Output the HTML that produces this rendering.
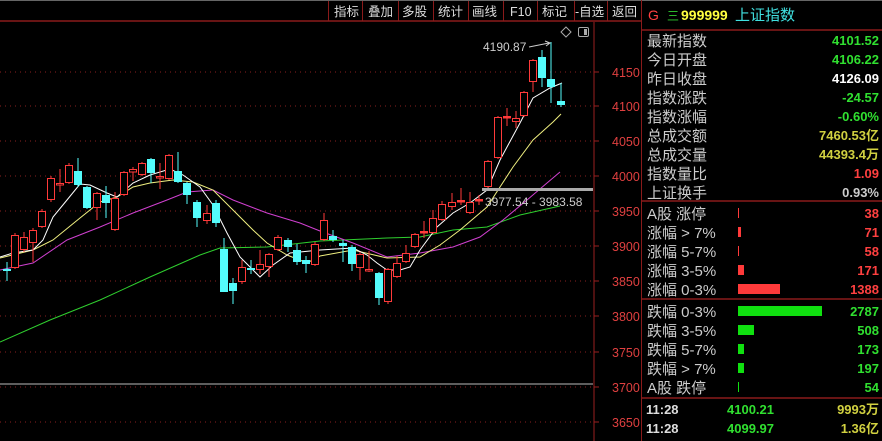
<!DOCTYPE html>
<html><head><meta charset="utf-8"><style>
html,body{margin:0;padding:0;background:#000;width:882px;height:441px;overflow:hidden}
svg{display:block}
.cn{font-family:"Liberation Sans","Noto Sans CJK SC",sans-serif}
</style></head><body>
<svg width="882" height="441" xmlns="http://www.w3.org/2000/svg" class="cn">
<rect width="882" height="441" fill="#000"/>
<line x1="0" y1="0.5" x2="882" y2="0.5" stroke="#666"/>
<!-- top bar -->
<line x1="0" y1="21" x2="641" y2="21" stroke="#8a1a1a" stroke-width="1.5"/>
<g stroke="#8a1a1a">
<line x1="328.5" y1="1" x2="328.5" y2="21"/><line x1="362.5" y1="1" x2="362.5" y2="21"/>
<line x1="398.5" y1="1" x2="398.5" y2="21"/><line x1="433.5" y1="1" x2="433.5" y2="21"/>
<line x1="468.5" y1="1" x2="468.5" y2="21"/><line x1="503.5" y1="1" x2="503.5" y2="21"/>
<line x1="537.5" y1="1" x2="537.5" y2="21"/><line x1="574.5" y1="1" x2="574.5" y2="21"/>
<line x1="607.5" y1="1" x2="607.5" y2="21"/><line x1="641.5" y1="0" x2="641.5" y2="441"/>
</g>
<g fill="#ddd" font-size="12.5">
<text x="334" y="16">指标</text><text x="368" y="16">叠加</text><text x="402" y="16">多股</text>
<text x="438" y="16">统计</text><text x="472" y="16">画线</text>
<text x="510" y="16" font-family="Liberation Sans">F10</text><text x="542" y="16">标记</text>
<text x="575" y="16">-自选</text><text x="612" y="16">返回</text>
</g>
<!-- grid -->
<g stroke="#8a2020" stroke-dasharray="1,4">
<line x1="0" y1="72" x2="593" y2="72"/><line x1="0" y1="106" x2="593" y2="106"/>
<line x1="0" y1="141" x2="593" y2="141"/><line x1="0" y1="176" x2="593" y2="176"/>
<line x1="0" y1="211" x2="593" y2="211"/><line x1="0" y1="246" x2="593" y2="246"/>
<line x1="0" y1="281" x2="593" y2="281"/><line x1="0" y1="316" x2="593" y2="316"/>
<line x1="0" y1="352" x2="593" y2="352"/><line x1="0" y1="387" x2="593" y2="387"/>
<line x1="0" y1="422" x2="593" y2="422"/>
</g>
<line x1="0" y1="384" x2="593" y2="384" stroke="#bbb"/>
<!-- axis -->
<line x1="594" y1="22" x2="594" y2="441" stroke="#9a2020"/>
<g stroke="#9a2020">
<line x1="594" y1="72" x2="599" y2="72"/><line x1="594" y1="106" x2="599" y2="106"/>
<line x1="594" y1="141" x2="599" y2="141"/><line x1="594" y1="176" x2="599" y2="176"/>
<line x1="594" y1="211" x2="599" y2="211"/><line x1="594" y1="246" x2="599" y2="246"/>
<line x1="594" y1="281" x2="599" y2="281"/><line x1="594" y1="316" x2="599" y2="316"/>
<line x1="594" y1="352" x2="599" y2="352"/><line x1="594" y1="387" x2="599" y2="387"/>
<line x1="594" y1="422" x2="599" y2="422"/>
</g>
<g fill="#e04040" font-size="12.5" font-family="Liberation Sans">
<text x="612" y="77">4150</text><text x="612" y="111">4100</text><text x="612" y="146">4050</text>
<text x="612" y="181">4000</text><text x="612" y="216">3950</text><text x="612" y="251">3900</text>
<text x="612" y="286">3850</text><text x="612" y="321">3800</text><text x="612" y="357">3750</text>
<text x="612" y="392">3700</text><text x="612" y="427">3650</text>
</g>
<!-- icons -->
<path d="M566 27 L571 32 L566 37 L561 32 Z" fill="none" stroke="#aaa"/>
<rect x="578.5" y="27.5" width="10" height="9" rx="1.5" fill="none" stroke="#aaa"/>
<rect x="584" y="29" width="3" height="6" fill="#aaa"/>
<!-- MA lines -->
<g fill="none" stroke-width="1">
<polyline stroke="#2fcf2f" points="0,342 50,320 100,300 150,277 200,255 220,248 267,247 320,241 387,238 420,237 453,230 487,227 520,215 560,206"/>
<polyline stroke="#d040d0" points="0,270 33,263 67,240 100,227 133,213 167,200 187,192 213,190 233,200 267,213 300,223 320,231 353,243 387,257 420,253 453,247 480,237 503,220 527,200 547,183 560,172"/>
<polyline stroke="#f0f080" points="0,258 33,250 53,240 80,218 100,202 117,197 133,187 150,183 173,180 193,182 213,190 233,210 253,230 267,243 287,255 307,263 320,256 353,250 387,258 420,257 440,245 460,230 487,207 500,187 513,167 533,140 553,122 561,114"/>
<polyline stroke="#fff" points="0,257 13,253 33,250 43,240 53,217 67,200 80,184 90,185 107,193 117,197 133,183 150,175 170,169 183,175 200,187 213,205 227,233 240,257 260,277 273,265 290,253 320,250 353,248 367,255 377,263 387,270 400,270 410,267 420,250 437,227 453,213 470,203 487,190 500,160 520,123 533,98 550,88 562,83"/>
</g>
<!-- candles -->
<g stroke-width="1">
<g stroke="#ff3a3a" fill="#000">
<line x1="15" y1="233" x2="15" y2="269"/><rect x="11.5" y="235.5" width="7" height="32"/>
<line x1="24" y1="232" x2="24" y2="252"/><rect x="20.5" y="237.5" width="7" height="12"/>
<line x1="33" y1="228" x2="33" y2="262"/><rect x="29.5" y="230.5" width="7" height="12"/>
<line x1="42" y1="209" x2="42" y2="228"/><rect x="38.5" y="211.5" width="7" height="15"/>
<line x1="51" y1="176" x2="51" y2="202"/><rect x="47.5" y="178.5" width="7" height="21"/>
<line x1="60" y1="169" x2="60" y2="192"/><rect x="56.5" y="183.5" width="7" height="1.5"/>
<line x1="69" y1="163" x2="69" y2="184"/><rect x="65.5" y="165.5" width="7" height="17"/>
<line x1="97" y1="192" x2="97" y2="220"/><rect x="93.5" y="193.5" width="7" height="14"/>
<line x1="115" y1="192" x2="115" y2="231"/><rect x="111.5" y="198.5" width="7" height="31"/>
<line x1="124" y1="171" x2="124" y2="196"/><rect x="120.5" y="172.5" width="7" height="22"/>
<line x1="133" y1="167" x2="133" y2="181"/><rect x="129.5" y="169.5" width="7" height="2.5"/>
<line x1="142" y1="162" x2="142" y2="176"/><rect x="138.5" y="163.5" width="7" height="11"/>
<line x1="160" y1="163" x2="160" y2="189"/><rect x="156.5" y="176.5" width="7" height="1.5"/>
<line x1="169" y1="154" x2="169" y2="180"/><rect x="165.5" y="155.5" width="7" height="23"/>
<line x1="207" y1="205" x2="207" y2="224"/><rect x="203.5" y="213.5" width="7" height="7"/>
<line x1="242" y1="260" x2="242" y2="284"/><rect x="238.5" y="267.5" width="7" height="14"/>
<line x1="260" y1="250" x2="260" y2="274"/><rect x="256.5" y="264.5" width="7" height="5"/>
<line x1="269" y1="253" x2="269" y2="277"/><rect x="265.5" y="254.5" width="7" height="12"/>
<line x1="278" y1="235" x2="278" y2="251"/><rect x="274.5" y="237.5" width="7" height="12"/>
<line x1="315" y1="242" x2="315" y2="266"/><rect x="311.5" y="244.5" width="7" height="20"/>
<line x1="324" y1="213" x2="324" y2="241"/><rect x="320.5" y="220.5" width="7" height="19"/>
<line x1="360" y1="252" x2="360" y2="280"/><rect x="356.5" y="254.5" width="7" height="13"/>
<line x1="369" y1="251" x2="369" y2="272"/><rect x="365.5" y="269.5" width="7" height="1.5"/>
<line x1="388" y1="268" x2="388" y2="304"/><rect x="384.5" y="269.5" width="7" height="32"/>
<line x1="397" y1="256" x2="397" y2="278"/><rect x="393.5" y="263.5" width="7" height="13"/>
<line x1="406" y1="245" x2="406" y2="263"/><rect x="402.5" y="253.5" width="7" height="8"/>
<line x1="415" y1="233" x2="415" y2="248"/><rect x="411.5" y="234.5" width="7" height="12"/>
<line x1="424" y1="221" x2="424" y2="238"/><rect x="420.5" y="231.5" width="7" height="1.5" fill="#ff3a3a"/>
<line x1="433" y1="210" x2="433" y2="234"/><rect x="429.5" y="218.5" width="7" height="14"/>
<line x1="442" y1="201" x2="442" y2="221"/><rect x="438.5" y="204.5" width="7" height="15"/>
<line x1="452" y1="193" x2="452" y2="210"/><rect x="448.5" y="202.5" width="7" height="4"/>
<line x1="461" y1="188" x2="461" y2="205"/><rect x="457.5" y="200.5" width="7" height="1.5" fill="#ff3a3a"/>
<line x1="470" y1="192" x2="470" y2="214"/><rect x="466.5" y="202.5" width="7" height="10"/>
<line x1="479" y1="195" x2="479" y2="205"/><rect x="475.5" y="199.5" width="7" height="1.5" fill="#ff3a3a"/>
<line x1="488" y1="160" x2="488" y2="188"/><rect x="484.5" y="161.5" width="7" height="25"/>
<line x1="498" y1="116" x2="498" y2="159"/><rect x="494.5" y="117.5" width="7" height="40"/>
<line x1="507" y1="108" x2="507" y2="126"/><rect x="503.5" y="116.5" width="7" height="1.5" fill="#ff3a3a"/>
<line x1="516" y1="111" x2="516" y2="128"/><rect x="512.5" y="118.5" width="7" height="3"/>
<line x1="524" y1="91" x2="524" y2="117"/><rect x="520.5" y="92.5" width="7" height="23"/>
<line x1="533" y1="59" x2="533" y2="92"/><rect x="529.5" y="60.5" width="7" height="21"/>
</g>
<g stroke="#54fcfc" fill="#54fcfc">
<line x1="7" y1="262" x2="7" y2="281"/><rect x="3.5" y="269.5" width="7" height="1"/>
<line x1="78" y1="158" x2="78" y2="187"/><rect x="74.5" y="171.5" width="7" height="13"/>
<line x1="87" y1="186" x2="87" y2="209"/><rect x="83.5" y="187.5" width="7" height="20"/>
<line x1="106" y1="186" x2="106" y2="218"/><rect x="102.5" y="195.5" width="7" height="7"/>
<line x1="151" y1="158" x2="151" y2="183"/><rect x="147.5" y="159.5" width="7" height="13"/>
<line x1="178" y1="152" x2="178" y2="183"/><rect x="174.5" y="171.5" width="7" height="10"/>
<line x1="187" y1="182" x2="187" y2="204"/><rect x="183.5" y="183.5" width="7" height="11"/>
<line x1="197" y1="200" x2="197" y2="227"/><rect x="193.5" y="202.5" width="7" height="15"/>
<line x1="216" y1="200" x2="216" y2="227"/><rect x="212.5" y="203.5" width="7" height="19"/>
<line x1="224" y1="238" x2="224" y2="292"/><rect x="220.5" y="249.5" width="7" height="42"/>
<line x1="233" y1="278" x2="233" y2="304"/><rect x="229.5" y="283.5" width="7" height="7"/>
<line x1="251" y1="260" x2="251" y2="274"/><rect x="247.5" y="268.5" width="7" height="1"/>
<line x1="288" y1="238" x2="288" y2="252"/><rect x="284.5" y="240.5" width="7" height="6"/>
<line x1="297" y1="244" x2="297" y2="265"/><rect x="293.5" y="250.5" width="7" height="11"/>
<line x1="306" y1="256" x2="306" y2="273"/><rect x="302.5" y="260.5" width="7" height="3"/>
<line x1="333" y1="230" x2="333" y2="242"/><rect x="329.5" y="236.5" width="7" height="3"/>
<line x1="343" y1="240" x2="343" y2="262"/><rect x="339.5" y="243.5" width="7" height="2"/>
<line x1="352" y1="245" x2="352" y2="271"/><rect x="348.5" y="247.5" width="7" height="16"/>
<line x1="379" y1="272" x2="379" y2="305"/><rect x="375.5" y="273.5" width="7" height="24"/>
<line x1="542" y1="50" x2="542" y2="87"/><rect x="538.5" y="57.5" width="7" height="20"/>
<line x1="551" y1="42" x2="551" y2="103"/><rect x="547.5" y="79.5" width="7" height="7"/>
<line x1="561" y1="83" x2="561" y2="107"/><rect x="557.5" y="101.5" width="7" height="3"/>
</g>
</g>
<!-- annotations -->
<text x="483" y="51" fill="#ccc" font-size="12" font-family="Liberation Sans">4190.87</text>
<path d="M529 47 L549 43 M545 41 L550 43 L546 46" fill="none" stroke="#ccc"/>
<rect x="482" y="188" width="111" height="3" fill="#aaa"/>
<text x="485" y="206" fill="#ccc" font-size="12" font-family="Liberation Sans">3977.54 - 3983.58</text>
<!-- right panel -->
<g stroke="#8a1a1a" stroke-width="1.5">
<line x1="641" y1="30" x2="882" y2="30"/><line x1="641" y1="201" x2="882" y2="201"/>
<line x1="641" y1="299" x2="882" y2="299"/><line x1="641" y1="398" x2="882" y2="398"/>
</g>
<text x="648" y="20" fill="#ff4040" font-size="14" font-family="Liberation Sans">G</text>
<text x="667" y="20" fill="#30d030" font-size="12">三</text>
<text x="681" y="20" fill="#ffff40" font-size="14" font-weight="bold" font-family="Liberation Sans">999999</text>
<text x="735" y="20" fill="#40e0e0" font-size="15">上证指数</text>
<g fill="#ccc" font-size="15">
<text x="647" y="46">最新指数</text><text x="647" y="65">今日开盘</text><text x="647" y="84">昨日收盘</text>
<text x="647" y="103">指数涨跌</text><text x="647" y="122">指数涨幅</text><text x="647" y="141">总成交额</text>
<text x="647" y="160">总成交量</text><text x="647" y="179">指数量比</text><text x="647" y="198">上证换手</text>
<text x="647" y="219">A股 涨停</text><text x="647" y="238">涨幅 &gt; 7%</text><text x="647" y="257">涨幅 5-7%</text>
<text x="647" y="276">涨幅 3-5%</text><text x="647" y="295">涨幅 0-3%</text>
<text x="647" y="317">跌幅 0-3%</text><text x="647" y="336">跌幅 3-5%</text><text x="647" y="355">跌幅 5-7%</text>
<text x="647" y="374">跌幅 &gt; 7%</text><text x="647" y="393">A股 跌停</text>
</g>
<g font-size="13" font-weight="bold" text-anchor="end">
<text x="879" y="45" fill="#30e030">4101.52</text>
<text x="879" y="64" fill="#30e030">4106.22</text>
<text x="879" y="83" fill="#fff">4126.09</text>
<text x="879" y="102" fill="#30e030">-24.57</text>
<text x="879" y="121" fill="#30e030">-0.60%</text>
<text x="879" y="140" fill="#d0d040">7460.53亿</text>
<text x="879" y="159" fill="#d0d040">44393.4万</text>
<text x="879" y="178" fill="#ff4040">1.09</text>
<text x="879" y="197" fill="#ccc">0.93%</text>
<text x="879" y="218" fill="#ff4040">38</text>
<text x="879" y="237" fill="#ff4040">71</text>
<text x="879" y="256" fill="#ff4040">58</text>
<text x="879" y="275" fill="#ff4040">171</text>
<text x="879" y="294" fill="#ff4040">1388</text>
<text x="879" y="316" fill="#30e030">2787</text>
<text x="879" y="335" fill="#30e030">508</text>
<text x="879" y="354" fill="#30e030">173</text>
<text x="879" y="373" fill="#30e030">197</text>
<text x="879" y="392" fill="#30e030">54</text>
</g>
<g fill="#ff3a3a">
<rect x="738" y="208" width="1" height="10"/><rect x="738" y="227" width="3" height="10"/>
<rect x="738" y="246" width="1" height="10"/><rect x="738" y="265" width="6" height="10"/>
<rect x="738" y="284" width="42" height="10"/>
</g>
<g fill="#10e010">
<rect x="738" y="306" width="84" height="10"/><rect x="738" y="325" width="16" height="10"/>
<rect x="738" y="344" width="6" height="10"/><rect x="738" y="363" width="6" height="10"/>
<rect x="738" y="382" width="1" height="10"/>
</g>
<g font-size="13" font-weight="bold" font-family="Liberation Sans">
<text x="646" y="414" fill="#ddd">11:28</text><text x="727" y="414" fill="#30e030">4100.21</text>
<text x="879" y="414" fill="#d0d040" text-anchor="end" class="cn">9993万</text>
<text x="646" y="433" fill="#ddd">11:28</text><text x="727" y="433" fill="#30e030">4099.97</text>
<text x="879" y="433" fill="#d0d040" text-anchor="end" class="cn">1.36亿</text>
<text x="646" y="452" fill="#ddd">11:28</text><text x="727" y="452" fill="#30e030">4100.21</text>
</g>
</svg>
</body></html>
